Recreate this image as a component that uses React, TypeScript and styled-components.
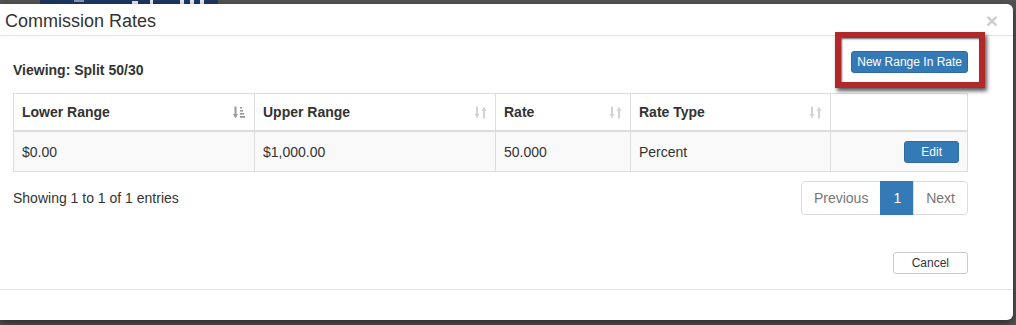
import React from "react";
import styled, { createGlobalStyle } from "styled-components";

const GlobalStyle = createGlobalStyle`
  html, body {
    margin: 0;
    padding: 0;
    background: #535353;
    font-family: "Liberation Sans", Arial, Helvetica, sans-serif;
    font-size: 14px;
    color: #333;
  }
  #root {
    width: 1016px;
    height: 325px;
    overflow: hidden;
  }
`;

const Page = styled.div`
  display: flex;
  flex-direction: column;
  height: 325px;
`;

const LogoStrip = styled.svg`
  display: block;
  margin-left: 40px;
  height: 4px;
  width: 178px;
`;

const Modal = styled.div`
  position: relative;
  margin-right: 3px;
  background: #fff;
  border-radius: 0 6px 6px 0;
  box-shadow: 0 3px 9px rgba(0, 0, 0, 0.5);
`;

const Header = styled.div`
  display: flex;
  align-items: center;
  justify-content: space-between;
  padding: 7px 15px 4px 5px;
  border-bottom: 1px solid #e5e5e5;
`;

const Title = styled.h4`
  margin: 0;
  font-size: 18px;
  font-weight: normal;
  line-height: 20px;
  color: #333;
`;

const Close = styled.button`
  border: 0;
  background: transparent;
  padding: 0;
  margin-top: -2px;
  font-family: "Liberation Sans", Arial, sans-serif;
  font-size: 21px;
  font-weight: bold;
  line-height: 1;
  color: #000;
  opacity: 0.2;
`;

const Body = styled.div`
  padding: 15px 45px 15px 13px;
`;

const Toolbar = styled.div`
  display: flex;
  justify-content: space-between;
  align-items: flex-start;
  margin-bottom: 13px;
`;

const Viewing = styled.div`
  padding-top: 9px;
  font-weight: bold;
  line-height: 20px;
`;

const Highlight = styled.div`
  position: relative;
  display: flex;
  margin: -19px -17px -8px 0;
  padding: 13px 11px 9px 10px;
  border: 6px solid #b0282a;
  box-shadow: 2px 3px 4px rgba(0, 0, 0, 0.65), inset 1px 1px 2px rgba(0, 0, 0, 0.6);
`;

interface IButtonProps {
  primary?: boolean;
  pad?: number;
}

const Button = styled.button<IButtonProps>`
  font-family: "Liberation Sans", Arial, sans-serif;
  font-size: 12px;
  line-height: 18px;
  padding: 1px ${props => props.pad ?? 5}px;
  border-radius: 3px;
  border: 1px solid ${props => (props.primary ? "#2e6da4" : "#ccc")};
  background: ${props => (props.primary ? "#337ab7" : "#fff")};
  color: ${props => (props.primary ? "#fff" : "#333")};
  cursor: pointer;
`;

const Table = styled.table`
  width: 954px;
  table-layout: fixed;
  border-collapse: collapse;
  border: 1px solid #ddd;
`;

const Th = styled.th`
  padding: 8px;
  text-align: left;
  font-weight: bold;
  line-height: 20px;
  border: 1px solid #ddd;
  border-bottom: 2px solid #ddd;
`;

const ThInner = styled.div`
  display: flex;
  align-items: center;
  justify-content: space-between;
`;

interface ITdProps {
  right?: boolean;
}

const Td = styled.td<ITdProps>`
  padding: 8px;
  line-height: 20px;
  background: #f9f9f9;
  border: 1px solid #ddd;
  text-align: ${props => (props.right ? "right" : "left")};
`;

const EditCell = styled(Td)`
  padding: 9px 8px 8px;
`;

const InfoRow = styled.div`
  display: flex;
  justify-content: space-between;
  align-items: center;
  margin-top: 9px;
`;

const Info = styled.div`
  line-height: 20px;
`;

const Pagination = styled.div`
  display: flex;
`;

interface IPageProps {
  active?: boolean;
}

const PageLink = styled.span<IPageProps>`
  padding: 6px 12px;
  line-height: 20px;
  border: 1px solid ${props => (props.active ? "#337ab7" : "#ddd")};
  background: ${props => (props.active ? "#337ab7" : "#fff")};
  color: ${props => (props.active ? "#fff" : "#777")};
  margin-left: -1px;
  &:first-child {
    margin-left: 0;
    border-radius: 4px 0 0 4px;
  }
  &:last-child {
    border-radius: 0 4px 4px 0;
  }
`;

const Actions = styled.div`
  display: flex;
  justify-content: flex-end;
  margin-top: 37px;
`;

const Footer = styled.div`
  height: 30px;
  border-top: 1px solid #e5e5e5;
`;

const SortIcon = ({ active }: { active?: boolean }) =>
  active ? (
    <svg width="13" height="13" viewBox="0 0 13 13">
      <g fill="#999">
        <rect x="1.5" y="0.5" width="2" height="8" />
        <polygon points="0,8 5,8 2.5,12.5" />
        <rect x="7" y="1" width="2" height="1.6" />
        <rect x="7" y="4" width="3" height="1.6" />
        <rect x="7" y="7" width="4" height="1.6" />
        <rect x="7" y="10" width="5" height="1.8" />
      </g>
    </svg>
  ) : (
    <svg width="13" height="13" viewBox="0 0 13 13">
      <g fill="#d3d3d3">
        <rect x="2" y="0.5" width="2" height="8" />
        <polygon points="0.5,8 5.5,8 3,12.5" />
        <rect x="9" y="4.5" width="2" height="8" />
        <polygon points="7.5,5 12.5,5 10,0.5" />
      </g>
    </svg>
  );

const columns = [
  { title: "Lower Range", width: 241, active: true },
  { title: "Upper Range", width: 241 },
  { title: "Rate", width: 135 },
  { title: "Rate Type", width: 200 },
  { title: "", width: 137 }
];

export default function App() {
  return (
    <Page>
      <GlobalStyle />
      <LogoStrip viewBox="0 0 178 4">
        <rect x="0" y="0" width="178" height="4" fill="#1d3865" />
        <rect x="34" y="0" width="10" height="2" fill="#8a97ad" />
        <rect x="92" y="1" width="6" height="3" fill="#e9edf3" />
        <rect x="110" y="0" width="3" height="4" fill="#e9edf3" />
        <rect x="140" y="0" width="4" height="4" fill="#e9edf3" />
        <rect x="150" y="0" width="4" height="4" fill="#e9edf3" />
        <rect x="160" y="0" width="4" height="4" fill="#e9edf3" />
      </LogoStrip>
      <Modal>
        <Header>
          <Title>Commission Rates</Title>
          <Close>×</Close>
        </Header>
        <Body>
          <Toolbar>
            <Viewing>Viewing: Split 50/30</Viewing>
            <Highlight>
              <Button primary>New Range In Rate</Button>
            </Highlight>
          </Toolbar>
          <Table>
            <colgroup>
              {columns.map((c, i) => (
                <col key={i} style={{ width: c.width }} />
              ))}
            </colgroup>
            <thead>
              <tr>
                {columns.map((c, i) => (
                  <Th key={i}>
                    <ThInner>
                      <span>{c.title || "\u00a0"}</span>
                      {c.title && <SortIcon active={c.active} />}
                    </ThInner>
                  </Th>
                ))}
              </tr>
            </thead>
            <tbody>
              <tr>
                <Td>$0.00</Td>
                <Td>$1,000.00</Td>
                <Td>50.000</Td>
                <Td>Percent</Td>
                <EditCell right>
                  <Button primary pad={16}>
                    Edit
                  </Button>
                </EditCell>
              </tr>
            </tbody>
          </Table>
          <InfoRow>
            <Info>Showing 1 to 1 of 1 entries</Info>
            <Pagination>
              <PageLink>Previous</PageLink>
              <PageLink active>1</PageLink>
              <PageLink>Next</PageLink>
            </Pagination>
          </InfoRow>
          <Actions>
            <Button pad={18}>Cancel</Button>
          </Actions>
        </Body>
        <Footer />
      </Modal>
    </Page>
  );
}
